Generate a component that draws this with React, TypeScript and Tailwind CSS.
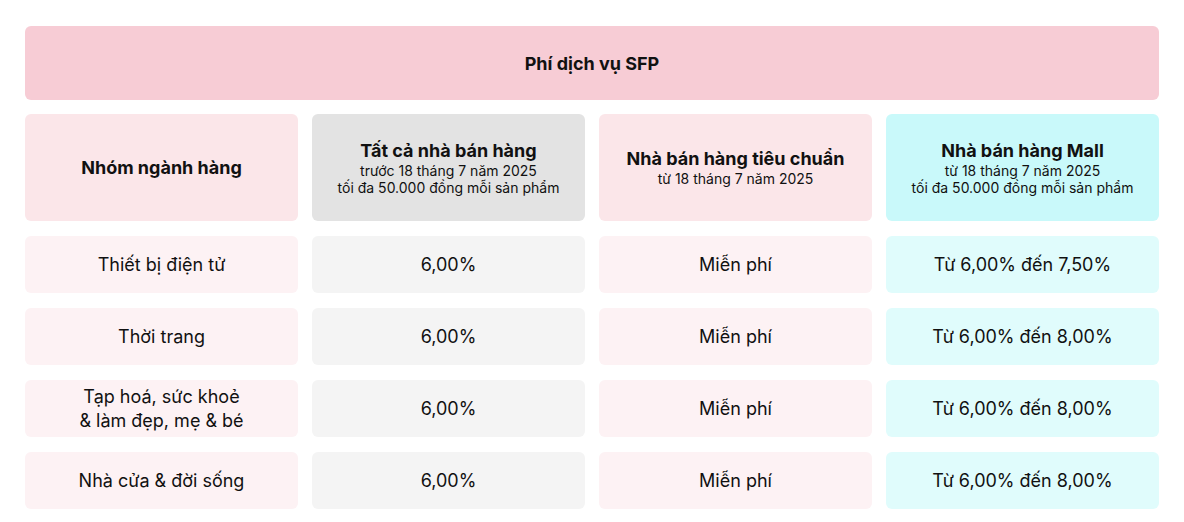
const headers = [
  { title: "Nhóm ngành hàng", lines: [], bg: "bg-[#fbe6e9]" },
  {
    title: "Tất cả nhà bán hàng",
    lines: ["trước 18 tháng 7 năm 2025", "tối đa 50.000 đồng mỗi sản phẩm"],
    bg: "bg-[#e3e3e3]",
  },
  { title: "Nhà bán hàng tiêu chuẩn", lines: ["từ 18 tháng 7 năm 2025"], bg: "bg-[#fbe6e9]" },
  {
    title: "Nhà bán hàng Mall",
    lines: ["từ 18 tháng 7 năm 2025", "tối đa 50.000 đồng mỗi sản phẩm"],
    bg: "bg-[#c9f9fa]",
  },
];

const rows = [
  { name: ["Thiết bị điện tử"], mall: "Từ 6,00% đến 7,50%" },
  { name: ["Thời trang"], mall: "Từ 6,00% đến 8,00%" },
  { name: ["Tạp hoá, sức khoẻ", "& làm đẹp, mẹ & bé"], mall: "Từ 6,00% đến 8,00%" },
  { name: ["Nhà cửa & đời sống"], mall: "Từ 6,00% đến 8,00%" },
];

const bodyBg = ["bg-[#fdf2f4]", "bg-[#f4f4f4]", "bg-[#fdf2f4]", "bg-[#e0fcfc]"];

export default function App() {
  return (
    <div className="min-h-[522px] bg-white px-[25px] pt-[26px] font-['Inter',sans-serif] text-[#111]">
      <div className="flex h-[74px] items-center justify-center rounded-md bg-[#f7ccd5] text-[18px] font-bold">
        Phí dịch vụ SFP
      </div>

      <div className="mt-[14px] grid grid-cols-4 gap-x-[14px]">
        {headers.map((h) => (
          <div
            key={h.title}
            className={`flex h-[107px] flex-col items-center justify-center rounded-md text-center ${h.bg}`}
          >
            <p className="text-[18px] leading-[22px] font-bold">{h.title}</p>
            {h.lines.map((l) => (
              <p key={l} className="text-[14px] leading-[17px]">
                {l}
              </p>
            ))}
          </div>
        ))}
      </div>

      <div className="mt-[15px] grid grid-cols-4 gap-x-[14px] gap-y-[15px]">
        {rows.map((r) => {
          const cells = [r.name, ["6,00%"], ["Miễn phí"], [r.mall]];
          return cells.map((c, i) => (
            <div
              key={r.name[0] + i}
              className={`flex h-[57px] flex-col items-center justify-center rounded-md text-center text-[18px] leading-[24px] ${bodyBg[i]}`}
            >
              {c.map((t) => (
                <span key={t}>{t}</span>
              ))}
            </div>
          ));
        })}
      </div>
    </div>
  );
}
